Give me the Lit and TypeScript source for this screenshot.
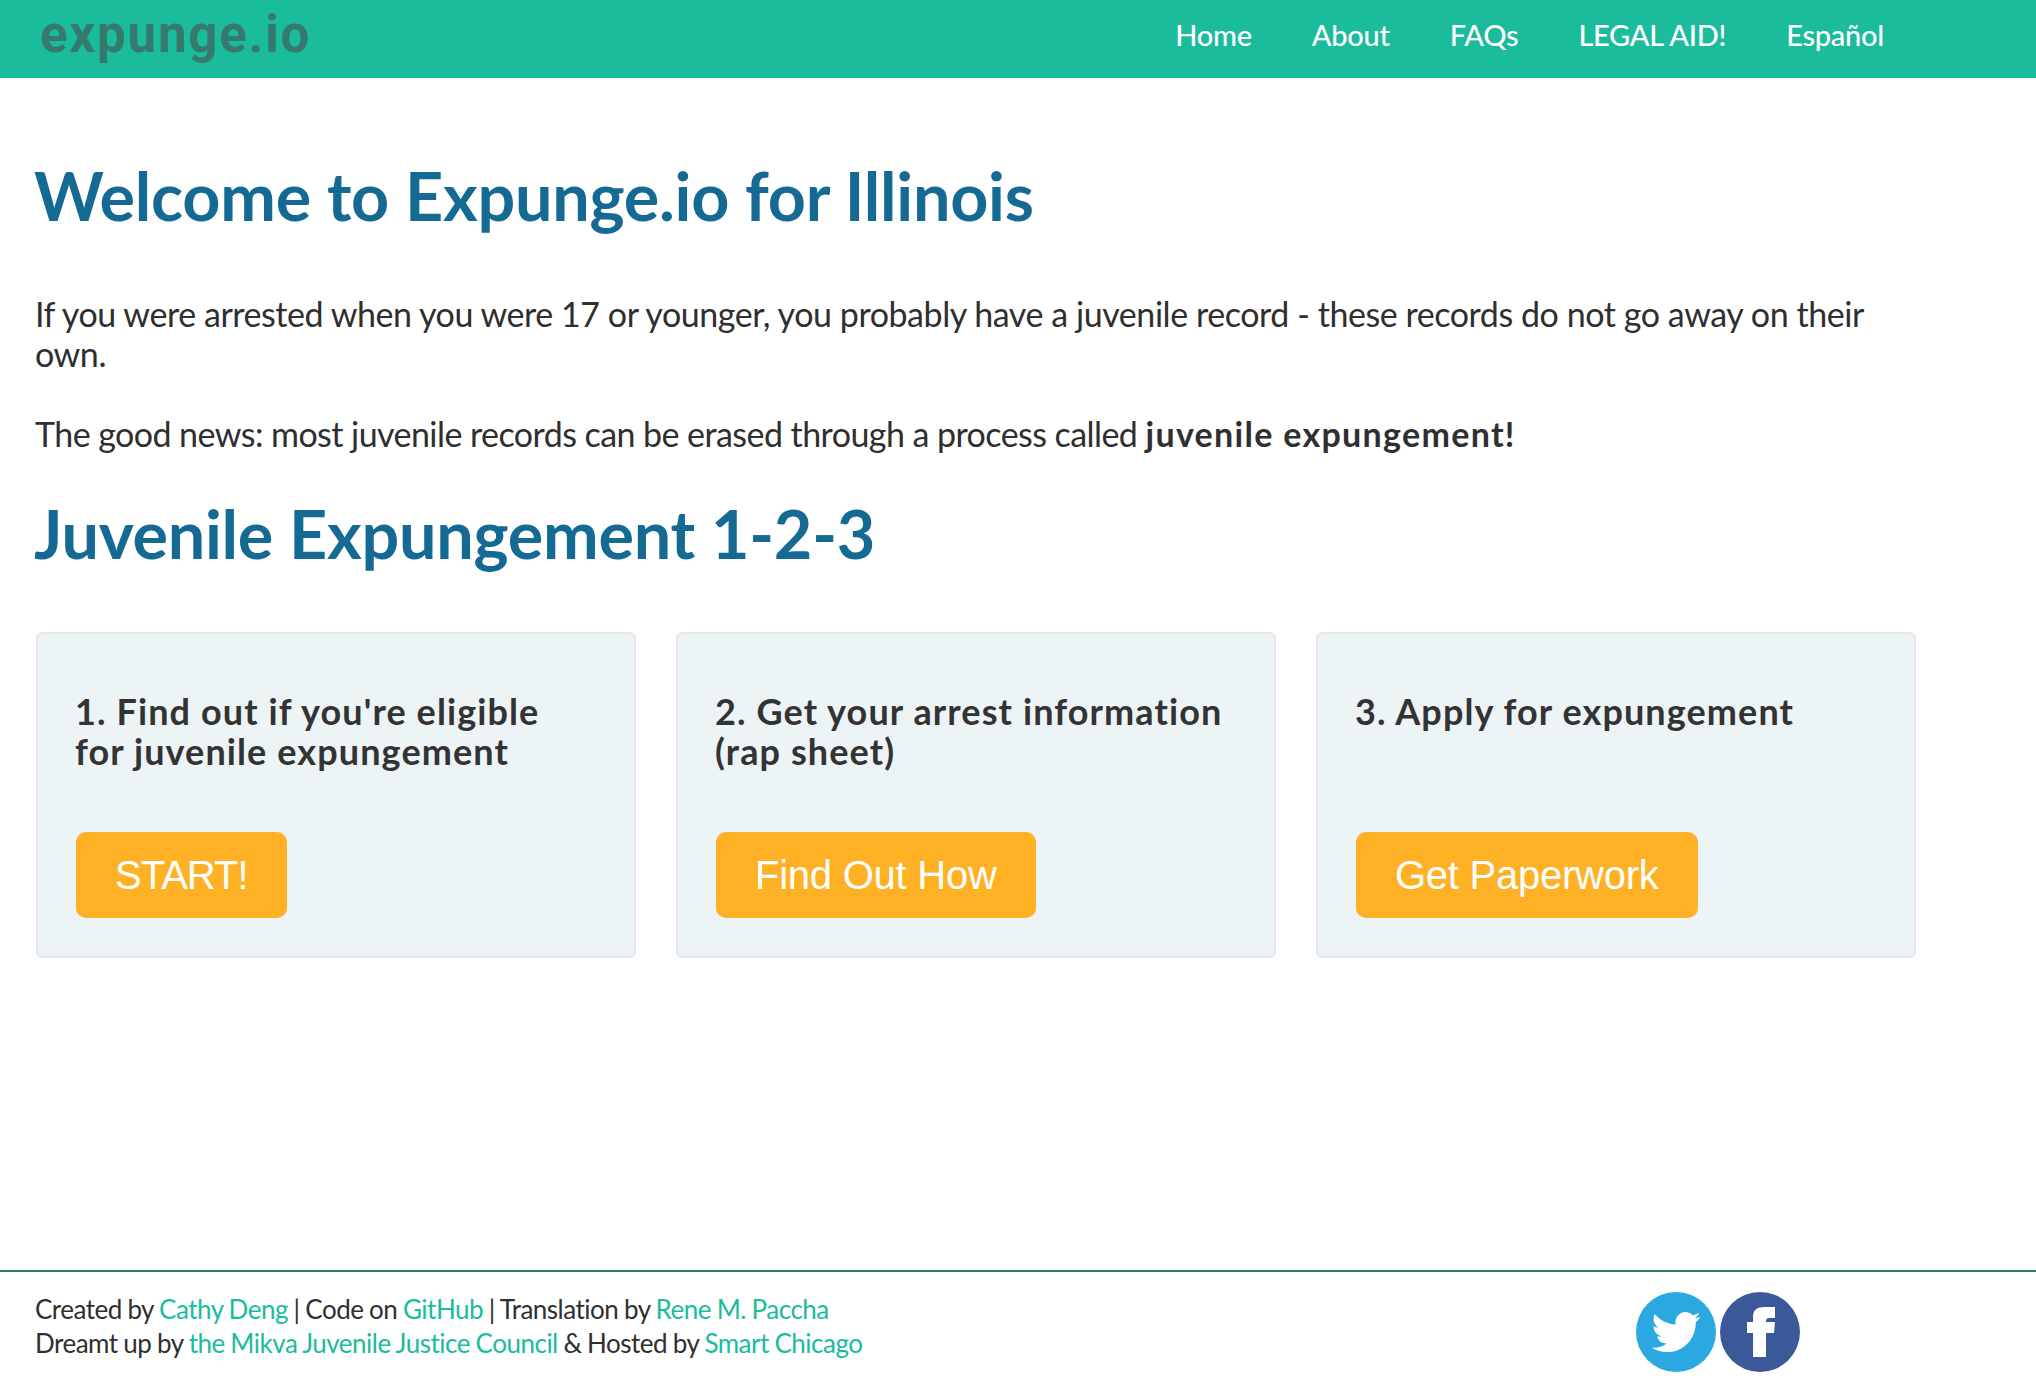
import { LitElement, html, css } from "lit";
import { customElement } from "lit/decorators.js";

@customElement("app-root")
export class AppRoot extends LitElement {
  static styles = css`
    :host { display: flex; flex-direction: column; min-height: 1384px; font-family: Lato, sans-serif; color: #2f2f2f; background: #fff; }
    header { height: 78px; background: #1abc9c; display: flex; align-items: center; justify-content: space-between; padding: 0 152px 0 40px; box-sizing: border-box; }
    .logo { font-family: Roboto, sans-serif; font-weight: 700; font-size: 51px; letter-spacing: 1.8px; color: #35796f; line-height: 70px; margin-top: -8px; filter: blur(0.7px); }
    nav { display: flex; gap: 60px; margin-top: -9px; }
    nav a { color: #fff; font-size: 29px; line-height: 70px; letter-spacing: -0.25px; font-weight: 500; }
    main { padding: 0 34px; }
    h1 { color: #156a94; font-size: 66.5px; font-weight: 700; line-height: 78px; margin: 0; letter-spacing: -0.25px; }
    h1.first { margin-top: 78px; margin-bottom: 60px; }
    p { font-size: 34px; line-height: 40px; margin: 0 0 40px 1px; width: 1860px; letter-spacing: -0.56px; }
    p.intro { letter-spacing: -0.44px; }
    p b { letter-spacing: 1.3px; }
    h1.second { margin-top: 1px; margin-bottom: 60px; }
    .cards { display: grid; grid-template-columns: repeat(3, 600px); gap: 40px; margin-left: 2px; }
    .card { box-sizing: border-box; height: 326px; background: #ecf4f6; border: 2px solid #e4e8ea; border-radius: 6px; padding: 57px 38px 38px; display: flex; flex-direction: column; justify-content: space-between; }
    h3 { margin: 0 0 0 -1px; font-size: 36px; font-weight: 700; line-height: 40px; letter-spacing: 1.1px; color: #333; max-width: 525px; }
    .btn { align-self: flex-start; box-sizing: border-box; height: 86px; line-height: 86px; padding: 0 39px; background: #ffb125; color: #fff; border-radius: 10px; font-family: "Liberation Sans", Arial, sans-serif; font-size: 40px; letter-spacing: -0.25px; }
    .btn.tight { letter-spacing: -1px; }
    footer { margin-top: auto; height: 114px; box-sizing: border-box; border-top: 2px solid #2e7a6b; display: flex; padding: 20px 0 0 35px; }
    .credits { font-size: 26px; line-height: 34px; letter-spacing: -0.5px; word-spacing: -0.5px; width: 1601px; color: #2f2f2f; }
    .credits a { color: #1abc9c; }
    .social { display: flex; gap: 4px; }
    .social svg { width: 80px; height: 80px; display: block; }
  `;

  render() {
    return html`
      <header>
        <div class="logo">expunge.io</div>
        <nav>
          <a>Home</a><a>About</a><a>FAQs</a><a>LEGAL AID!</a><a>Español</a>
        </nav>
      </header>
      <main>
        <h1 class="first">Welcome to Expunge.io for Illinois</h1>
        <p class="intro">If you were arrested when you were 17 or younger, you probably have a juvenile record - these records do not go away on their own.</p>
        <p>The good news: most juvenile records can be erased through a process called <b>juvenile expungement!</b></p>
        <h1 class="second">Juvenile Expungement 1-2-3</h1>
        <div class="cards">
          <div class="card"><h3>1. Find out if you're eligible for juvenile expungement</h3><a class="btn tight">START!</a></div>
          <div class="card"><h3>2. Get your arrest information (rap sheet)</h3><a class="btn">Find Out How</a></div>
          <div class="card"><h3>3. Apply for expungement</h3><a class="btn">Get Paperwork</a></div>
        </div>
      </main>
      <footer>
        <div class="credits">
          Created by <a>Cathy Deng</a> | Code on <a>GitHub</a> | Translation by <a>Rene M. Paccha</a><br />
          Dreamt up by <a>the Mikva Juvenile Justice Council</a> &amp; Hosted by <a>Smart Chicago</a>
        </div>
        <div class="social">
          <svg viewBox="0 0 80 80" aria-label="Twitter">
            <circle cx="40" cy="40" r="40" fill="#2aa9e0"></circle>
            <g transform="translate(15.5 15.5) scale(2.05)" fill="#fff">
              <path d="M23.95 4.57a10 10 0 0 1-2.82.77 4.96 4.96 0 0 0 2.16-2.72c-.95.55-2 .96-3.13 1.19a4.92 4.92 0 0 0-8.38 4.48C7.69 8.1 4.07 6.13 1.64 3.16a4.9 4.9 0 0 0-.67 2.48c0 1.71.87 3.21 2.19 4.1a4.9 4.9 0 0 1-2.23-.62v.06a4.92 4.92 0 0 0 3.95 4.83 5 5 0 0 1-2.22.08 4.94 4.94 0 0 0 4.6 3.42A9.87 9.87 0 0 1 0 19.54a13.9 13.9 0 0 0 7.55 2.21c9.05 0 14-7.5 14-13.98 0-.21 0-.42-.01-.63a10 10 0 0 0 2.41-2.57z"></path>
            </g>
          </svg>
          <svg viewBox="0 0 80 80" aria-label="Facebook">
            <circle cx="40" cy="40" r="40" fill="#3b5998"></circle>
            <path fill="#fff" d="M33 65V41h-6V30h6v-5c0-7 4-10 11-10h11v11h-6c-2 0-3 1-3 3v1h9l-1 11h-8v24z"></path>
          </svg>
        </div>
      </footer>
    `;
  }
}
